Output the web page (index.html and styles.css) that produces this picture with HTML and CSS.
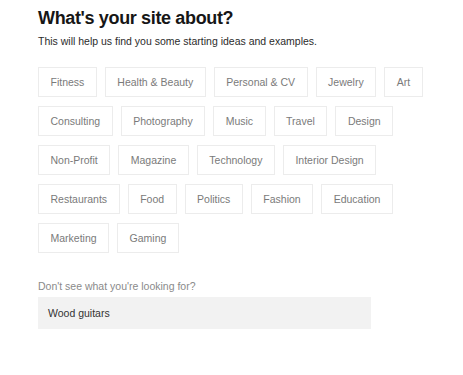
FILE: index.html
```html
<!DOCTYPE html>
<html>
<head>
<meta charset="utf-8">
<link rel="stylesheet" href="styles.css">
</head>
<body>
<div class="page">
  <h1 class="title">What's your site about?</h1>
  <p class="subtitle">This will help us find you some starting ideas and examples.</p>
  <div class="chips">
    <span class="chip">Fitness</span>
    <span class="chip">Health &amp; Beauty</span>
    <span class="chip">Personal &amp; CV</span>
    <span class="chip">Jewelry</span>
    <span class="chip">Art</span>
    <span class="chip">Consulting</span>
    <span class="chip">Photography</span>
    <span class="chip">Music</span>
    <span class="chip">Travel</span>
    <span class="chip">Design</span>
    <span class="chip">Non-Profit</span>
    <span class="chip">Magazine</span>
    <span class="chip">Technology</span>
    <span class="chip">Interior Design</span>
    <span class="chip">Restaurants</span>
    <span class="chip">Food</span>
    <span class="chip">Politics</span>
    <span class="chip">Fashion</span>
    <span class="chip">Education</span>
    <span class="chip">Marketing</span>
    <span class="chip">Gaming</span>
  </div>
  <div class="custom">
    <label class="label">Don't see what you're looking for?</label>
    <div class="input">Wood guitars</div>
  </div>
</div>
</body>
</html>
```
FILE: styles.css
```css
html, body {
  margin: 0;
  padding: 0;
  background: #ffffff;
}
.page {
  font-family: "Liberation Sans", Arial, sans-serif;
  padding: 6px 38px 0 38px;
  width: 392px;
}
.title {
  margin: 0;
  font-size: 18px;
  font-weight: 700;
  color: #161616;
  line-height: 24px;
  letter-spacing: -0.35px;
}
.subtitle {
  margin: 4px 0 0 0;
  font-size: 10.5px;
  line-height: 14px;
  color: #2b2b2b;
}
.chips {
  display: flex;
  flex-wrap: wrap;
  gap: 9px 8px;
  margin-top: 19px;
}
.chip {
  display: flex;
  align-items: center;
  height: 30px;
  box-sizing: border-box;
  padding: 0 11.5px;
  border: 1px solid #ececec;
  font-size: 10.5px;
  color: #7a7a7a;
}
.custom {
  margin-top: 26px;
}
.label {
  display: block;
  font-size: 10.5px;
  color: #8a8a8a;
  line-height: 14px;
}
.input {
  margin-top: 4px;
  width: 333px;
  height: 32px;
  box-sizing: border-box;
  background: #f2f2f2;
  padding: 0 10px;
  display: flex;
  align-items: center;
  font-size: 10.5px;
  color: #333333;
}
```
